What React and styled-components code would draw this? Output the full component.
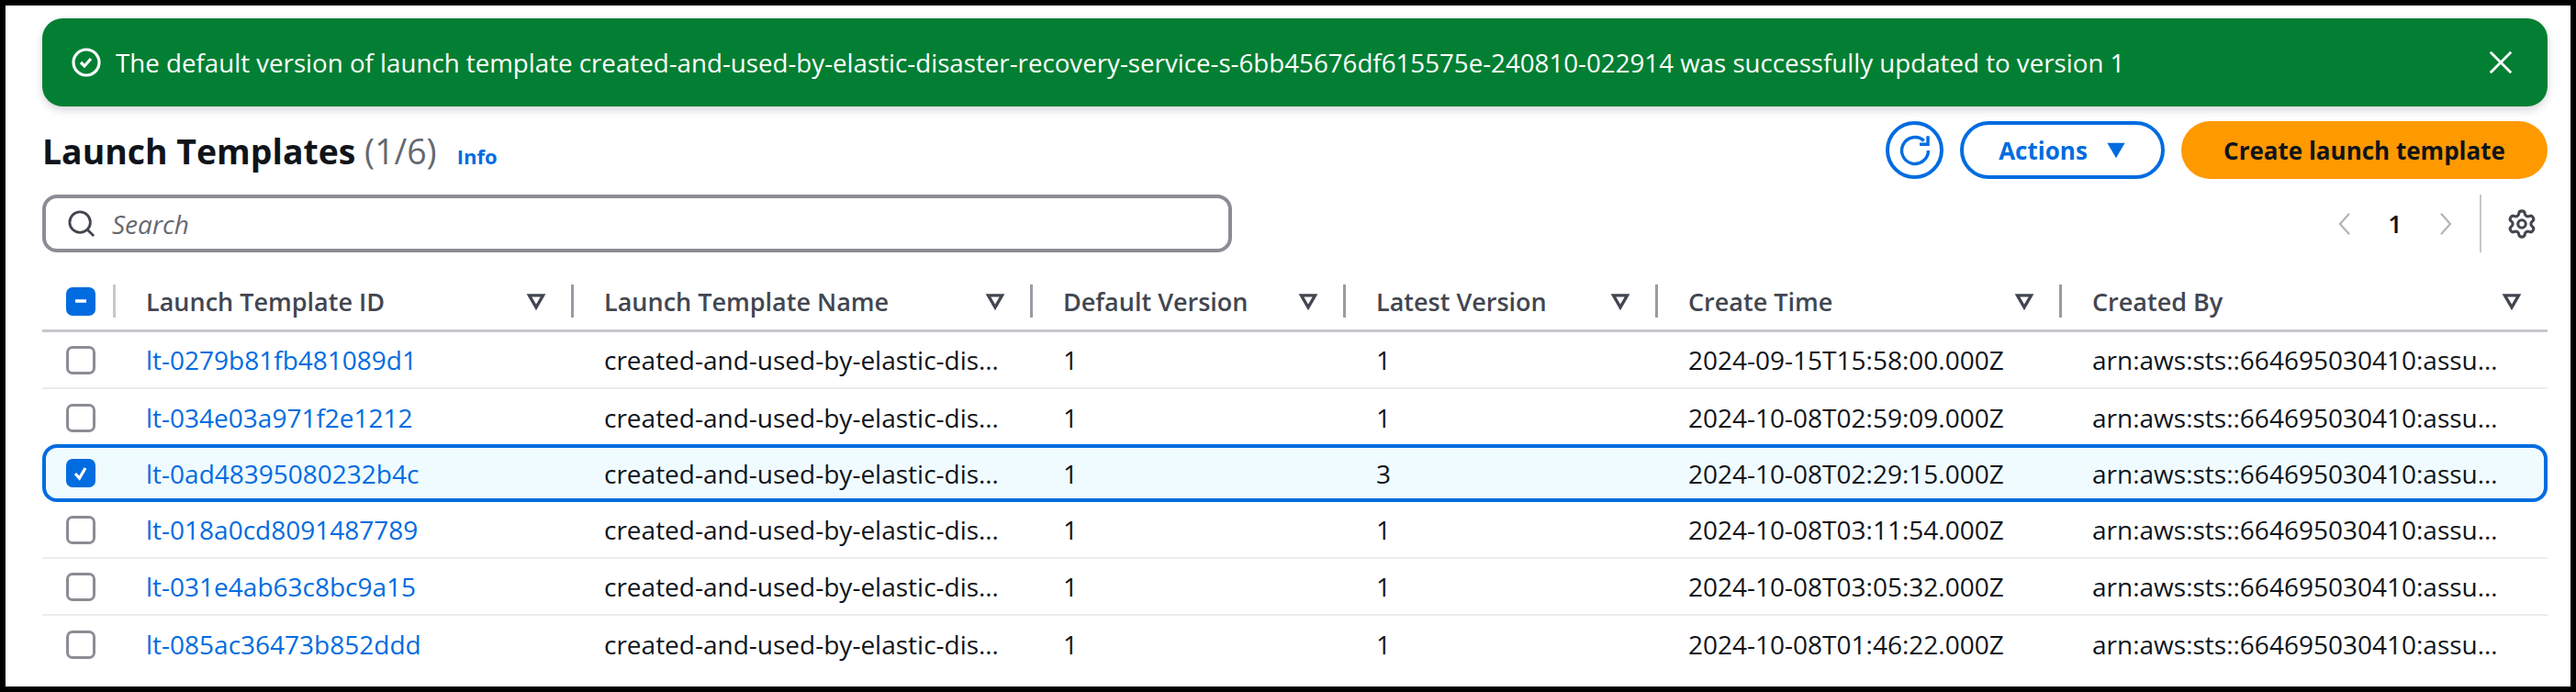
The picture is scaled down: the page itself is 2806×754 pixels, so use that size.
import styled, { createGlobalStyle } from "styled-components";
import { Settings } from "lucide-react";

const FONT = `"Open Sans", "Noto Sans", sans-serif`;
const NAME = "created-and-used-by-elastic-disaster-recovery-service-s-6bb45676df615575e-240810-022914";
const ARN = "arn:aws:sts::664695030410:assumed-role/AWSServiceRoleForElasticDisasterRecovery";

const COLUMNS = [
    { label: "Launch Template ID" },
    { label: "Launch Template Name" },
    { label: "Default Version" },
    { label: "Latest Version" },
    { label: "Create Time" },
    { label: "Created By", last: true },
];

const ROWS = [
    { id: "lt-0279b81fb481089d1", latest: 1, time: "2024-09-15T15:58:00.000Z" },
    { id: "lt-034e03a971f2e1212", latest: 1, time: "2024-10-08T02:59:09.000Z", beforeSelected: true },
    { id: "lt-0ad48395080232b4c", latest: 3, time: "2024-10-08T02:29:15.000Z", selected: true },
    { id: "lt-018a0cd8091487789", latest: 1, time: "2024-10-08T03:11:54.000Z" },
    { id: "lt-031e4ab63c8bc9a15", latest: 1, time: "2024-10-08T03:05:32.000Z" },
    { id: "lt-085ac36473b852ddd", latest: 1, time: "2024-10-08T01:46:22.000Z", last: true },
];

export default function App() {
    return (
        <Panel>
            <GlobalStyle />
            <Flash>
                <FlashIcon viewBox="0 0 16 16">
                    <circle cx="8" cy="8" r="7" />
                    <path d="m5 8 2 2 3.5-4" />
                </FlashIcon>
                <FlashText>
                    The default version of launch template {NAME} was successfully updated to version 1
                </FlashText>
                <CloseIcon viewBox="0 0 16 16">
                    <path d="m2 2 12 12M14 2 2 14" />
                </CloseIcon>
            </Flash>

            <Header>
                <Title>
                    Launch Templates <Count>(1/6)</Count>
                </Title>
                <InfoLink>Info</InfoLink>
                <Actions>
                    <RefreshButton>
                        <RefreshIcon viewBox="0 0 16 16">
                            <path d="M14.8 8a6.8 6.8 0 1 1-2.2-5" />
                            <path d="M14.6 0.6v4.2h-4.2" />
                        </RefreshIcon>
                    </RefreshButton>
                    <ActionsButton>
                        Actions
                        <Caret viewBox="0 0 16 16">
                            <path d="M1 2h14L8 14z" />
                        </Caret>
                    </ActionsButton>
                    <PrimaryButton>Create launch template</PrimaryButton>
                </Actions>
            </Header>

            <FilterBar>
                <SearchBox>
                    <SearchIcon viewBox="0 0 16 16">
                        <circle cx="7" cy="7" r="6" />
                        <path d="m11.3 11.3 3.7 3.7" />
                    </SearchIcon>
                    <SearchPlaceholder>Search</SearchPlaceholder>
                </SearchBox>
                <Pager>
                    <PagerArrow viewBox="0 0 12 24">
                        <path d="M10 3 2 12l8 9" />
                    </PagerArrow>
                    <PageNumber>1</PageNumber>
                    <PagerArrow viewBox="0 0 12 24">
                        <path d="m2 3 8 9-8 9" />
                    </PagerArrow>
                    <PagerDivider />
                    <GearIcon size={34} strokeWidth={2.2} />
                </Pager>
            </FilterBar>

            <Table>
                <HeadRow>
                    <CheckCell>
                        <Checkbox $checked>
                            <svg width="20" height="20" viewBox="0 0 20 20">
                                <path d="M4 10h12" stroke="#fff" strokeWidth="3.5" />
                            </svg>
                        </Checkbox>
                        <HeadDivider $light />
                    </CheckCell>
                    {COLUMNS.map((col) => (
                        <HeadCell key={col.label}>
                            <HeadLabel>{col.label}</HeadLabel>
                            <SortIcon viewBox="0 0 16 16">
                                <path d="M2.5 3.5h11L8 13z" />
                            </SortIcon>
                            {!col.last && <HeadDivider />}
                        </HeadCell>
                    ))}
                </HeadRow>

                {ROWS.map((row) => (
                    <Row key={row.id} $selected={row.selected} $plain={row.beforeSelected || row.last}>
                        <CheckCell>
                            <Checkbox $checked={row.selected}>
                                {row.selected && (
                                    <svg width="22" height="22" viewBox="0 0 22 22" fill="none">
                                        <path d="m5 11 4.5 5L16 5" stroke="#fff" strokeWidth="3.2" />
                                    </svg>
                                )}
                            </Checkbox>
                        </CheckCell>
                        <Cell><RowLink>{row.id}</RowLink></Cell>
                        <Cell><Ellipsis>{NAME}</Ellipsis></Cell>
                        <Cell>1</Cell>
                        <Cell>{row.latest}</Cell>
                        <Cell>{row.time}</Cell>
                        <Cell $wide><Ellipsis>{ARN}</Ellipsis></Cell>
                    </Row>
                ))}
            </Table>
        </Panel>
    );
}

const GlobalStyle = createGlobalStyle`
    html, body {
        margin: 0;
        background: #000;
    }
    body {
        padding: 6px;
        box-sizing: border-box;
        height: 754px;
        overflow: hidden;
        font-family: ${FONT};
    }
`;

const Panel = styled.div`
    height: 742px;
    background: #fff;
    padding: 14px 25px 0 40px;
    box-sizing: border-box;
    color: #0f141a;
`;

const Flash = styled.div`
    display: flex;
    align-items: center;
    height: 96px;
    padding: 0 36px 0 32px;
    box-sizing: border-box;
    border-radius: 22px;
    background: #037f33;
    box-shadow: 0 4px 10px rgba(0, 7, 22, 0.16);
    color: #fff;
`;

const FlashIcon = styled.svg`
    width: 32px;
    height: 32px;
    margin-right: 16px;
    fill: none;
    stroke: #fff;
    stroke-width: 1.6;
    flex-shrink: 0;
`;

const FlashText = styled.span`
    flex: 1;
    font-size: 27.7px;
    line-height: 40px;
    white-space: nowrap;
`;

const CloseIcon = styled.svg`
    width: 30px;
    height: 30px;
    fill: none;
    stroke: #fff;
    stroke-width: 1.5;
`;

const Header = styled.div`
    display: flex;
    align-items: center;
    height: 63px;
    margin-top: 16px;
`;

const Title = styled.h1`
    margin: 3px 0 0;
    font-size: 37.4px;
    line-height: 44px;
    font-weight: 700;
`;

const Count = styled.span`
    font-weight: 400;
    color: #656871;
`;

const InfoLink = styled.span`
    margin-left: 22px;
    margin-top: 12px;
    font-size: 22px;
    font-weight: 700;
    color: #006ce0;
`;

const Actions = styled.div`
    display: flex;
    margin-left: auto;
    gap: 18px;
`;

const OutlineButton = styled.div`
    display: flex;
    align-items: center;
    justify-content: center;
    height: 63px;
    box-sizing: border-box;
    border: 4px solid #006ce0;
    border-radius: 32px;
    color: #006ce0;
    font-size: 26px;
    font-weight: 700;
`;

const RefreshButton = styled(OutlineButton)`
    width: 63px;
`;

const RefreshIcon = styled.svg`
    width: 34px;
    height: 34px;
    fill: none;
    stroke: #006ce0;
    stroke-width: 1.6;
`;

const ActionsButton = styled(OutlineButton)`
    width: 223px;
    gap: 20px;
`;

const Caret = styled.svg`
    width: 22px;
    height: 22px;
    fill: #006ce0;
`;

const PrimaryButton = styled.div`
    display: flex;
    align-items: center;
    justify-content: center;
    width: 399px;
    height: 63px;
    border-radius: 32px;
    background: #ff9900;
    font-size: 26px;
    font-weight: 700;
`;

const FilterBar = styled.div`
    display: flex;
    align-items: center;
    justify-content: space-between;
    height: 63px;
    margin-top: 17px;
`;

const SearchBox = styled.div`
    display: flex;
    align-items: center;
    width: 1296px;
    height: 63px;
    box-sizing: border-box;
    padding-left: 24px;
    border: 4px solid #8c8c94;
    border-radius: 16px;
`;

const SearchIcon = styled.svg`
    width: 30px;
    height: 30px;
    margin-right: 18px;
    fill: none;
    stroke: #424650;
    stroke-width: 1.5;
`;

const SearchPlaceholder = styled.span`
    font-size: 28px;
    font-style: italic;
    color: #656871;
`;

const Pager = styled.div`
    display: flex;
    align-items: center;
    height: 63px;
`;

const PagerArrow = styled.svg`
    width: 16px;
    height: 30px;
    fill: none;
    stroke: #b4b4bb;
    stroke-width: 1.8;
`;

const PageNumber = styled.span`
    width: 94px;
    text-align: center;
    font-size: 27px;
    font-weight: 600;
    color: #0f141a;
`;

const PagerDivider = styled.div`
    width: 2px;
    height: 63px;
    margin: 0 27px 0 29px;
    background: #c6c6cd;
`;

const GearIcon = styled(Settings)`
    color: #424650;
    margin-right: 11px;
`;

const Table = styled.div`
    display: flex;
    flex-direction: column;
    margin-top: 15px;
`;

const GRID = "78px 499px 500px 341px 340px 440px 530px";

const HeadRow = styled.div`
    display: grid;
    grid-template-columns: ${GRID};
    align-items: center;
    height: 72px;
    box-sizing: border-box;
    padding-top: 7px;
    border-bottom: 3px solid #c6c6cd;
`;

const CheckCell = styled.div`
    display: flex;
    align-items: center;
    justify-content: space-between;
    padding-left: 26px;
`;

const Checkbox = styled.div`
    display: flex;
    align-items: center;
    justify-content: center;
    width: 32px;
    height: 31px;
    box-sizing: border-box;
    border-radius: 7px;
    border: ${(p) => (p.$checked ? "none" : "3px solid #8c8c94")};
    background: ${(p) => (p.$checked ? "#006ce0" : "#fff")};
`;

const HeadCell = styled.div`
    display: flex;
    align-items: center;
    padding-left: 35px;
    color: #424650;
    font-size: 27px;
    font-weight: 600;
`;

const HeadLabel = styled.span`
    flex: 1;
    white-space: nowrap;
`;

const SortIcon = styled.svg`
    width: 22px;
    height: 22px;
    margin-right: 27px;
    fill: none;
    stroke: #424650;
    stroke-width: 2.4;
`;

const HeadDivider = styled.div`
    width: 3px;
    height: 36px;
    margin-right: -2px;
    background: ${(p) => (p.$light ? "#c6c6cd" : "#9a9aa3")};
    flex-shrink: 0;
`;

const Row = styled.div`
    display: grid;
    grid-template-columns: ${GRID};
    align-items: center;
    height: ${(p) => (p.$selected ? "63px" : "62px")};
    box-sizing: border-box;
    margin-top: ${(p) => (p.$selected ? "-2px" : "0")};
    border-bottom: ${(p) => (p.$plain || p.$selected ? "none" : "2px solid #ebebf0")};
    border-radius: ${(p) => (p.$selected ? "16px" : "0")};
    background: ${(p) => (p.$selected ? "#f0fbff" : "transparent")};
    box-shadow: ${(p) => (p.$selected ? "inset 0 0 0 4px #006ce0" : "none")};
    font-size: 28px;
`;

const Cell = styled.div`
    min-width: 0;
    padding: 0 ${(p) => (p.$wide ? "42px" : "35px")} 0 35px;
    white-space: nowrap;
`;

const Ellipsis = styled.div`
    overflow: hidden;
    text-overflow: ellipsis;
`;

const RowLink = styled.span`
    color: #006ce0;
`;
